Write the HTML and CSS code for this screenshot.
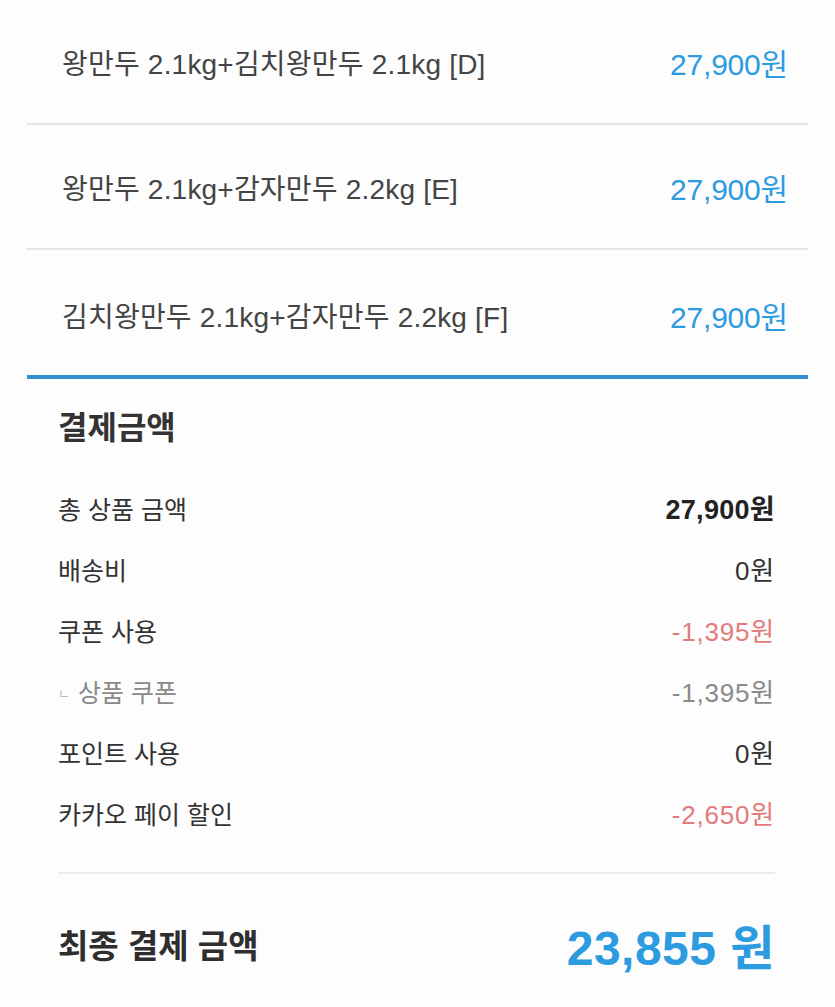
FILE: index.html
```html
<!DOCTYPE html>
<html lang="ko">
  <head>
    <meta charset="UTF-8" />
    <meta name="viewport" content="width=device-width, initial-scale=1.0" />
    <title>결제금액</title>
    <link rel="stylesheet" href="styles.css">
  </head>
  <body>
    <ul class="items">
      <li class="item">
        <span class="item-name">왕만두 2.1kg+김치왕만두 2.1kg [D]</span>
        <span class="item-price">27,900원</span>
      </li>
      <li class="item">
        <span class="item-name">왕만두 2.1kg+감자만두 2.2kg [E]</span>
        <span class="item-price">27,900원</span>
      </li>
      <li class="item item-last">
        <span class="item-name">김치왕만두 2.1kg+감자만두 2.2kg [F]</span>
        <span class="item-price">27,900원</span>
      </li>
    </ul>

    <section class="summary">
      <h2 class="summary-title">결제금액</h2>
      <dl class="rows">
        <div class="row">
          <dt>총 상품 금액</dt>
          <dd class="strong">27,900원</dd>
        </div>
        <div class="row">
          <dt>배송비</dt>
          <dd>0원</dd>
        </div>
        <div class="row">
          <dt>쿠폰 사용</dt>
          <dd class="minus">-1,395원</dd>
        </div>
        <div class="row sub">
          <dt><span class="branch">ㄴ</span>상품 쿠폰</dt>
          <dd>-1,395원</dd>
        </div>
        <div class="row">
          <dt>포인트 사용</dt>
          <dd>0원</dd>
        </div>
        <div class="row">
          <dt>카카오 페이 할인</dt>
          <dd class="minus">-2,650원</dd>
        </div>
      </dl>
      <div class="total">
        <span class="total-label">최종 결제 금액</span>
        <span class="total-price">23,855 원</span>
      </div>
    </section>
  </body>
</html>
```

FILE: styles.css
```css
body {
  margin: 0;
  background: #fdfdfd;
  font-family: "Liberation Sans", "Noto Sans CJK KR", sans-serif;
  color: #333333;
}

.items {
  list-style: none;
  margin: 0 27px;
  padding: 0;
}

.item {
  display: flex;
  justify-content: space-between;
  align-items: center;
  height: 123px;
  padding: 0 20px 0 35px;
  border-bottom: 2px solid #e6e6e6;
}

.item-last {
  height: 121px;
  padding-top: 4px;
  border-bottom: 4px solid #2f8fcf;
}

.item-name {
  font-size: 28px;
  color: #444444;
  letter-spacing: 0.2px;
}

.item-price {
  font-size: 30px;
  color: #2d9be0;
  letter-spacing: -0.2px;
}

.summary {
  padding: 0 60px 0 58px;
}

.summary-title {
  margin: 28px 0 28px;
  font-size: 32px;
  line-height: 42px;
  font-weight: 700;
  color: #333333;
}

.rows {
  margin: 0;
  padding-bottom: 29px;
  border-bottom: 2px solid #ececec;
}

.row {
  display: flex;
  justify-content: space-between;
  align-items: center;
  height: 61px;
}

.row dt,
.row dd {
  margin: 0;
  color: #333333;
}

.row dt {
  font-size: 25px;
}

.row dd {
  font-size: 26px;
  letter-spacing: 0.8px;
}

.row dd.strong {
  font-size: 27px;
  font-weight: 700;
  letter-spacing: 0.3px;
  color: #222222;
}

.row dd.minus {
  color: #e27b7b;
}

.sub dt,
.sub dd {
  color: #8a8a8a;
}

.branch {
  font-size: 13px;
  color: #bbbbbb;
  margin-right: 8px;
  vertical-align: 4px;
}

.total {
  display: flex;
  justify-content: space-between;
  align-items: center;
  height: 140px;
}

.total-label {
  font-size: 33px;
  font-weight: 700;
  color: #2e2e2e;
}

.total-price {
  font-size: 48px;
  font-weight: 700;
  color: #2d9be0;
  letter-spacing: 0.5px;
}
```
